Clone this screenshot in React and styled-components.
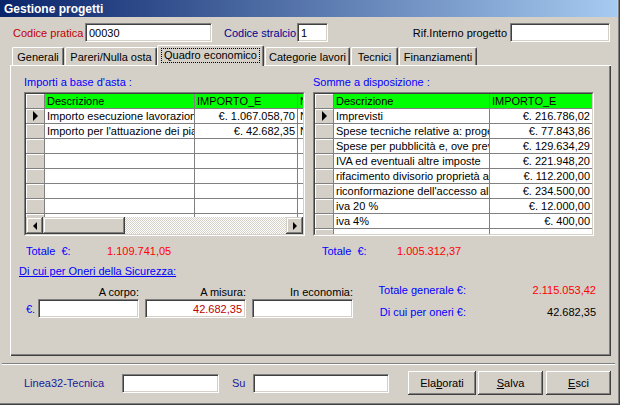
import React from 'react';
import styled, { createGlobalStyle } from 'styled-components';

const GlobalStyle = createGlobalStyle`
  html, body { margin: 0; padding: 0; background: #d4d0c8; }
  body { font-family: "Liberation Sans", Arial, sans-serif; font-size: 11px; color: #000; }
`;

const Window = styled.div`
  box-sizing: border-box;
  width: 620px;
  height: 405px;
  background: #d4d0c8;
  padding: 0 3px 3px 0;
  box-shadow: inset -1px -1px #404040, inset -2px -2px #808080;
  display: flex;
  flex-direction: column;
  overflow: hidden;
`;

const TitleBar = styled.div`
  height: 17px;
  flex: none;
  background: linear-gradient(to right, #0a246a, #a6caf0);
  color: #fff;
  font-weight: bold;
  font-size: 12px;
  display: flex;
  align-items: center;
  padding-left: 4px;
`;

const HeaderRow = styled.div`
  display: flex;
  align-items: center;
  margin-top: 6px;
  height: 19px;
  padding: 0 7px 0 13px;
`;

const Label = styled.span`
  display: inline-block;
  flex: none;
  width: ${p => (p.$w ? `${p.$w}px` : 'auto')};
  margin-left: ${p => (p.$auto ? 'auto' : `${p.$ml || 0}px`)};
  margin-right: ${p => p.$mr || 0}px;
  color: ${p => p.$color || '#000'};
  font-size: 11px;
  white-space: pre;
`;

const Field = styled.input`
  box-sizing: border-box;
  flex: none;
  width: ${p => p.$w}px;
  height: 19px;
  margin: 0;
  padding: 0 3px;
  border-style: solid;
  border-width: 1px;
  border-color: #808080 #fff #fff #808080;
  box-shadow: inset 1px 1px #404040, inset -1px -1px #d4d0c8;
  background: #fff;
  font-family: "Liberation Sans", Arial, sans-serif;
  font-size: 11px;
  color: ${p => p.$color || '#000'};
  text-align: ${p => (p.$right ? 'right' : 'left')};
  outline: none;
`;

const TabBar = styled.div`
  position: relative;
  z-index: 1;
  display: flex;
  align-items: flex-end;
  height: 20px;
  margin-top: 3px;
  padding-left: 12px;
`;

const Tab = styled.div`
  box-sizing: border-box;
  flex: none;
  width: ${p => p.$w}px;
  height: ${p => (p.$active ? 21 : 18)}px;
  margin-left: ${p => p.$ml}px;
  margin-bottom: ${p => (p.$active ? -1 : 0)}px;
  background: #d4d0c8;
  border-top: 1px solid #fff;
  border-left: 1px solid #fff;
  border-right: 1px solid #404040;
  border-radius: 2px 2px 0 0;
  box-shadow: inset -1px 0 #808080;
  display: flex;
  align-items: center;
  justify-content: center;
  font-size: 11px;
  padding-bottom: ${p => (p.$active ? 2 : 0)}px;
`;

const FocusRect = styled.span`
  box-sizing: border-box;
  width: calc(100% - 6px);
  height: 15px;
  border: 1px dotted #000;
  display: flex;
  align-items: center;
  justify-content: center;
`;

const Panel = styled.div`
  box-sizing: border-box;
  flex: none;
  margin-left: 10px;
  width: 601px;
  height: 291px;
  background: #d4d0c8;
  box-shadow: inset 1px 1px #fff, inset -1px -1px #404040, inset -2px -2px #808080;
  padding: 11px 14px 0 14px;
  display: flex;
  flex-direction: column;
`;

const GridsRow = styled.div`
  display: flex;
  gap: 8px;
`;

const Column = styled.div`
  width: 281px;
  display: flex;
  flex-direction: column;
`;

const SectionTitle = styled.div`
  color: #0000ff;
  font-size: 11px;
  line-height: 13px;
  height: 13px;
  margin-bottom: 3px;
`;

const GridFrame = styled.div`
  box-sizing: border-box;
  width: 281px;
  height: 144px;
  border-style: solid;
  border-width: 1px;
  border-color: #808080 #fff #fff #808080;
  display: flex;
  flex-direction: column;
  overflow: hidden;
`;

const GridInner = styled.div`
  flex: 1;
  min-height: 0;
  display: flex;
  flex-direction: column;
  border-style: solid;
  border-width: 1px;
  border-color: #404040 #d4d0c8 #d4d0c8 #404040;
  overflow: hidden;
`;

const GridBody = styled.div`
  flex: 1;
  min-height: 0;
  overflow: hidden;
  background: #fff;
`;

const GridRow = styled.div`
  display: flex;
  height: 15px;
  box-sizing: border-box;
  border-bottom: 1px solid #808080;
  flex: none;
`;

const SelectorCell = styled.div`
  flex: none;
  width: 19px;
  box-sizing: border-box;
  background: #d4d0c8;
  border-right: 1px solid #808080;
  box-shadow: inset 1px 1px #fff;
  display: flex;
  align-items: center;
  justify-content: center;
`;

const Pointer = styled.span`
  width: 0;
  height: 0;
  border-style: solid;
  border-width: 5px 0 5px 5px;
  border-color: transparent transparent transparent #000;
`;

const Cell = styled.div`
  flex: ${p => (p.$w ? 'none' : '1')};
  width: ${p => (p.$w ? `${p.$w}px` : 'auto')};
  min-width: 0;
  box-sizing: border-box;
  border-right: ${p => (p.$last ? 'none' : '1px solid #808080')};
  background: ${p => (p.$head ? '#00ff00' : '#fff')};
  padding: 0 2px;
  overflow: hidden;
  white-space: nowrap;
  text-align: ${p => (p.$right ? 'right' : 'left')};
  line-height: 14px;
  font-size: 11px;
  color: #000;
`;

const ScrollBar = styled.div`
  flex: none;
  height: 17px;
  display: flex;
  background: #d4d0c8;
`;

const ScrollBtn = styled.div`
  box-sizing: border-box;
  flex: none;
  width: ${p => p.$w || 17}px;
  height: 17px;
  background: #d4d0c8;
  box-shadow: inset -1px -1px #404040, inset 1px 1px #d4d0c8, inset -2px -2px #808080, inset 2px 2px #fff;
  display: flex;
  align-items: center;
  justify-content: center;
`;

const Arrow = styled.span`
  width: 0;
  height: 0;
  border-style: solid;
  border-width: ${p => (p.$dir === 'left' ? '4px 4px 4px 0' : '4px 0 4px 4px')};
  border-color: ${p => (p.$dir === 'left' ? 'transparent #000 transparent transparent' : 'transparent transparent transparent #000')};
`;

const Track = styled.div`
  flex: 1;
  background-image: repeating-conic-gradient(#fff 0% 25%, #d4d0c8 0% 50%);
  background-size: 2px 2px;
`;

const TotalRow = styled.div`
  display: flex;
  margin-top: 9px;
  height: 13px;
  line-height: 13px;
  padding-left: ${p => p.$pl}px;
`;

const TotalLabel = styled.span`
  width: ${p => p.$w}px;
  color: #0000ff;
  white-space: pre;
`;

const RedValue = styled.span`
  color: #ff0000;
`;

const BottomSection = styled.div`
  display: flex;
  margin-top: 7px;
`;

const OneriBlock = styled.div`
  width: 329px;
  flex: none;
`;

const LinkLabel = styled.div`
  color: #0000ff;
  text-decoration: underline;
  margin-left: -5px;
  line-height: 13px;
  height: 13px;
`;

const MeasureGrid = styled.div`
  display: grid;
  grid-template-columns: 8px 101px 101px 101px;
  grid-template-rows: 13px 19px;
  column-gap: 6px;
  margin-top: 8px;
  align-items: center;
`;

const MeasureLabel = styled.span`
  justify-self: end;
  line-height: 13px;
`;

const Euro = styled.span`
  color: #0000ff;
  padding-left: 2px;
  white-space: nowrap;
`;

const SummaryGrid = styled.div`
  display: grid;
  grid-template-columns: 96px 130px;
  grid-auto-rows: 22px;
  align-items: center;
  margin-left: 17px;
  margin-top: 14px;
`;

const SummaryLabel = styled.span`
  justify-self: end;
  color: #0000ff;
`;

const SummaryValue = styled.span`
  justify-self: end;
  color: ${p => p.$color};
`;

const Separator = styled.div`
  flex: none;
  margin: 7px 2px 0 2px;
  border-top: 1px solid #808080;
  border-bottom: 1px solid #fff;
`;

const Footer = styled.div`
  flex: none;
  height: 36px;
  display: flex;
  align-items: center;
  padding: 0 6px 0 24px;
`;

const ButtonGroup = styled.div`
  display: flex;
  margin-left: auto;
`;

const Btn = styled.button`
  box-sizing: border-box;
  flex: none;
  width: ${p => p.$w}px;
  height: 24px;
  margin: 0 0 0 ${p => p.$ml || 0}px;
  padding: 0;
  border: none;
  background: #d4d0c8;
  box-shadow: inset -1px -1px #404040, inset 1px 1px #fff, inset -2px -2px #808080, inset 2px 2px #d4d0c8;
  font-family: "Liberation Sans", Arial, sans-serif;
  font-size: 11px;
  color: #000;
`;

const tabs = [
  { label: 'Generali', w: 52, ml: 0 },
  { label: 'Pareri/Nulla osta', w: 92, ml: 1 },
  { label: 'Quadro economico', w: 107, ml: 0, active: true },
  { label: 'Categorie lavori', w: 85, ml: 1 },
  { label: 'Tecnici', w: 47, ml: 1 },
  { label: 'Finanziamenti', w: 78, ml: 1 },
];

const leftRows = [
  ['Importo esecuzione lavorazioni', '€. 1.067.058,70', 'NO'],
  ["Importo per l'attuazione dei piani di sicurezza", '€. 42.682,35', 'NO'],
  ['', '', ''], ['', '', ''], ['', '', ''], ['', '', ''], ['', '', ''], ['', '', ''],
];

const rightRows = [
  ['Imprevisti', '€. 216.786,02'],
  ['Spese tecniche relative a: progettazione', '€. 77.843,86'],
  ['Spese per pubblicità e, ove previsto', '€. 129.634,29'],
  ['IVA ed eventuali altre imposte', '€. 221.948,20'],
  ['rifacimento divisorio proprietà adiacente', '€. 112.200,00'],
  ["riconformazione dell'accesso all'area", '€. 234.500,00'],
  ['iva 20 %', '€. 12.000,00'],
  ['iva 4%', '€. 400,00'],
  ['', ''],
];

function LeftGrid() {
  return (
    <GridFrame>
      <GridInner>
        <GridRow>
          <SelectorCell />
          <Cell $head $w={150}>Descrizione</Cell>
          <Cell $head $w={103}>IMPORTO_E</Cell>
          <Cell $head $last>NOTE</Cell>
        </GridRow>
        <GridBody>
          {leftRows.map((r, i) => (
            <GridRow key={i}>
              <SelectorCell>{i === 0 && <Pointer />}</SelectorCell>
              <Cell $w={150}>{r[0]}</Cell>
              <Cell $w={103} $right>{r[1]}</Cell>
              <Cell $last>{r[2]}</Cell>
            </GridRow>
          ))}
        </GridBody>
        <ScrollBar>
          <ScrollBtn><Arrow $dir="left" /></ScrollBtn>
          <ScrollBtn $w={82} />
          <Track />
          <ScrollBtn><Arrow $dir="right" /></ScrollBtn>
        </ScrollBar>
      </GridInner>
    </GridFrame>
  );
}

function RightGrid() {
  return (
    <GridFrame>
      <GridInner>
        <GridRow>
          <SelectorCell />
          <Cell $head $w={156}>Descrizione</Cell>
          <Cell $head $last>IMPORTO_E</Cell>
        </GridRow>
        <GridBody>
          {rightRows.map((r, i) => (
            <GridRow key={i}>
              <SelectorCell>{i === 0 && <Pointer />}</SelectorCell>
              <Cell $w={156}>{r[0]}</Cell>
              <Cell $right $last>{r[1]}</Cell>
            </GridRow>
          ))}
        </GridBody>
      </GridInner>
    </GridFrame>
  );
}

export default function App() {
  return (
    <>
      <GlobalStyle />
      <Window>
        <TitleBar>Gestione progetti</TitleBar>
        <HeaderRow>
          <Label $w={72} $color="#c00000">Codice pratica</Label>
          <Field $w={127} defaultValue="00030" readOnly />
          <Label $w={73} $ml={12} $color="#000090">Codice stralcio</Label>
          <Field $w={31} defaultValue="1" readOnly />
          <Label $auto $mr={3}>Rif.Interno progetto</Label>
          <Field $w={100} defaultValue="" readOnly />
        </HeaderRow>
        <TabBar>
          {tabs.map(t => (
            <Tab key={t.label} $w={t.w} $ml={t.ml} $active={t.active}>
              {t.active ? <FocusRect>{t.label}</FocusRect> : t.label}
            </Tab>
          ))}
        </TabBar>
        <Panel>
          <GridsRow>
            <Column>
              <SectionTitle>Importi a base d'asta :</SectionTitle>
              <LeftGrid />
              <TotalRow $pl={2}>
                <TotalLabel $w={81}>{'Totale  €:'}</TotalLabel>
                <RedValue>1.109.741,05</RedValue>
              </TotalRow>
            </Column>
            <Column>
              <SectionTitle>Somme a disposizione :</SectionTitle>
              <RightGrid />
              <TotalRow $pl={9}>
                <TotalLabel $w={75}>{'Totale  €:'}</TotalLabel>
                <RedValue>1.005.312,37</RedValue>
              </TotalRow>
            </Column>
          </GridsRow>
          <BottomSection>
            <OneriBlock>
              <LinkLabel>Di cui per Oneri della Sicurezza:</LinkLabel>
              <MeasureGrid>
                <span />
                <MeasureLabel>A corpo:</MeasureLabel>
                <MeasureLabel>A misura:</MeasureLabel>
                <MeasureLabel>In economia:</MeasureLabel>
                <Euro>€.</Euro>
                <Field $w={101} defaultValue="" readOnly />
                <Field $w={101} $right $color="#c00000" defaultValue="42.682,35" readOnly />
                <Field $w={101} defaultValue="" readOnly />
              </MeasureGrid>
            </OneriBlock>
            <SummaryGrid>
              <SummaryLabel>Totale generale €:</SummaryLabel>
              <SummaryValue $color="#ff0000">2.115.053,42</SummaryValue>
              <SummaryLabel>Di cui per oneri €:</SummaryLabel>
              <SummaryValue $color="#000">42.682,35</SummaryValue>
            </SummaryGrid>
          </BottomSection>
        </Panel>
        <Separator />
        <Footer>
          <Label $w={98} $color="#1a1a9c">Linea32-Tecnica</Label>
          <Field $w={97} defaultValue="" readOnly />
          <Label $w={21} $ml={13} $color="#1a1a9c">Su</Label>
          <Field $w={136} defaultValue="" readOnly />
          <ButtonGroup>
            <Btn $w={68}>Ela<u>b</u>orati</Btn>
            <Btn $w={65} $ml={2}><u>S</u>alva</Btn>
            <Btn $w={65} $ml={3}><u>E</u>sci</Btn>
          </ButtonGroup>
        </Footer>
      </Window>
    </>
  );
}
